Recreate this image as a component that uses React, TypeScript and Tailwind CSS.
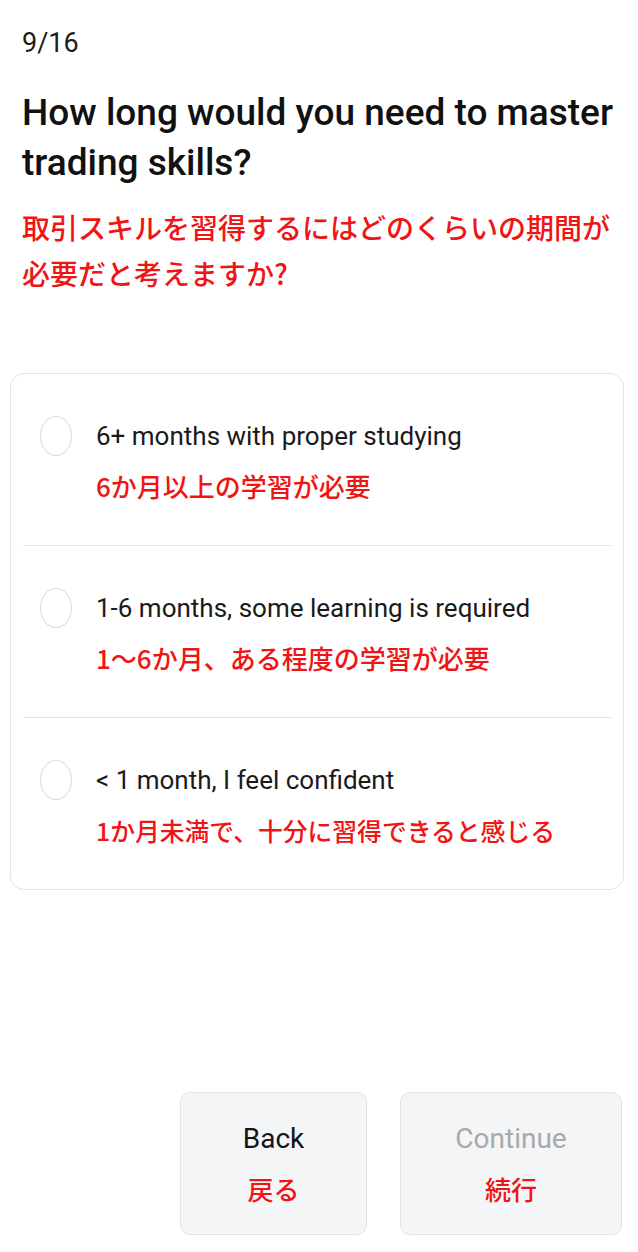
import React from "react";

const LATIN = { fontFamily: "Roboto, 'Liberation Sans', 'Noto Sans CJK JP', sans-serif" };
const JP = { fontFamily: "'Noto Sans CJK JP', 'Noto Sans', sans-serif" };

const options = [
  { en: "6+ months with proper studying", jp: "6か月以上の学習が必要", size: "text-[26px]" },
  { en: "1-6 months, some learning is required", jp: "1～6か月、ある程度の学習が必要", size: "text-[26px]" },
  { en: "< 1 month, I feel confident", jp: "1か月未満で、十分に習得できると感じる", size: "text-[24.8px]" },
];

export default function App() {
  return (
    <div className="w-[638px] h-[1252px] bg-white flex flex-col pl-[10px] pr-[14px] pb-[17px]">
      <div className="pl-[12px]">
        <div className="pt-[27px] text-[27px] leading-[32px] text-[#1c1c1c]" style={LATIN}>
          9/16
        </div>
        <h1 className="mt-[29px] text-[37px] leading-[50px] font-medium text-[#111111]" style={LATIN}>
          How long would you need to master trading skills?
        </h1>
        <p className="mt-[16px] text-[28px] leading-[46px] font-medium text-[#f01414]" style={JP}>
          取引スキルを習得するにはどのくらいの期間が必要だと考えますか?
        </p>
      </div>

      <div className="mt-[77px] border border-[#e4e4e4] rounded-[14px] bg-white">
        {options.map((o, i) => (
          <div key={i}>
            {i > 0 && <div className="mx-[12px] h-px bg-[#e2e2e2]" />}
            <div className="flex items-start pl-[29px] pt-[46px] pb-[41px]">
              <div className="h-[32px] flex items-center">
                <div className="w-[32px] h-[40px] rounded-[50%] border-[1.5px] border-[#dcdcdc] bg-white" />
              </div>
              <div className="ml-[24px] flex flex-col gap-[16px]">
                <div className="text-[26px] leading-[32px] text-[#1a1a1a]" style={LATIN}>
                  {o.en}
                </div>
                <div className={`${o.size} leading-[36px] font-medium text-[#f01414]`} style={JP}>
                  {o.jp}
                </div>
              </div>
            </div>
          </div>
        ))}
      </div>

      <div className="mt-auto flex justify-end gap-[33px] pr-[2px]">
        <button className="w-[187px] h-[143px] rounded-[10px] border border-[#e2e3e5] bg-[#f4f5f7] flex flex-col items-center justify-center gap-[16px]">
          <span className="text-[28px] leading-[34px] text-[#141414]" style={LATIN}>Back</span>
          <span className="text-[26px] leading-[34px] font-medium text-[#f01414]" style={JP}>戻る</span>
        </button>
        <button className="w-[222px] h-[143px] rounded-[10px] border border-[#e2e3e5] bg-[#f4f5f7] flex flex-col items-center justify-center gap-[16px]">
          <span className="text-[28px] leading-[34px] text-[#a9a9a9]" style={LATIN}>Continue</span>
          <span className="text-[26px] leading-[34px] font-medium text-[#f01414]" style={JP}>続行</span>
        </button>
      </div>
    </div>
  );
}
